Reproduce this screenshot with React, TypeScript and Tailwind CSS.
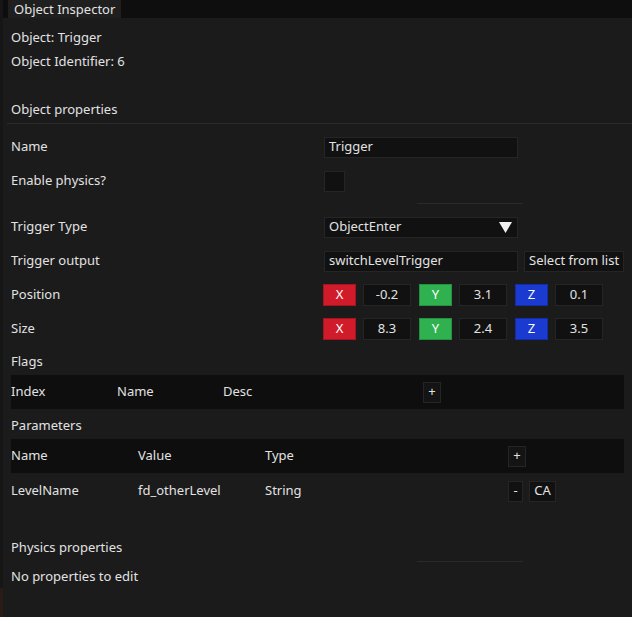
import React from "react";

const Sep = ({ w = "w-[106px]", ml = "ml-[417px]" }: { w?: string; ml?: string }) => (
  <div className={`h-px ${w} ${ml} bg-[#2a2a2a]`} />
);

const Box = ({ children, className = "" }: { children?: React.ReactNode; className?: string }) => (
  <div className={`bg-[#111111] border border-[#252525] flex items-center whitespace-nowrap ${className}`}>{children}</div>
);

const Axis = ({ label, color, value }: { label: string; color: string; value: string }) => (
  <div className="flex items-center">
    <div className={`w-[33px] h-[22px] flex items-center justify-center ${color} text-white`}>{label}</div>
    <Box className="ml-[7px] w-[48px] h-[22px] justify-center">{value}</Box>
  </div>
);

export default function App() {
  return (
    <div
      className="w-[632px] h-[617px] bg-[#1b1b1b] text-[#e2e2e2] text-[13px] relative overflow-hidden"
      style={{ fontFamily: '"Noto Sans", "Open Sans", sans-serif' }}
    >
      <div className="absolute left-0 top-0 w-[3px] h-full bg-[#161616]" />
      <div className="absolute left-0 top-[588px] w-[3px] h-[29px] bg-[#2a1b14]" />
      {/* tab bar */}
      <div className="h-[18px] bg-[#0e0e0e] flex pl-[8px]">
        <div className="bg-[#1f1f1f] px-[6px] h-[18px] flex items-center leading-none">Object Inspector</div>
      </div>
      <div className="pl-[11px] pr-[8px]">
        <div className="h-[24px] mt-[8px] flex items-center">Object: Trigger</div>
        <div className="h-[24px] flex items-center">Object Identifier: 6</div>
        <div className="h-[24px] mt-[24px] flex items-center">Object properties</div>
      </div>
      <div className="h-px bg-[#2a2a2a] ml-[7px] mt-[1px]" />
      <div className="pl-[11px]">
        <div className="flex items-center h-[22px] mt-[12px]">
          <div className="w-[313px]">Name</div>
          <Box className="w-[194px] h-[21px] px-[4px]">Trigger</Box>
        </div>
        <div className="flex items-center h-[22px] mt-[12px]">
          <div className="w-[313px]">Enable physics?</div>
          <Box className="w-[21px] h-[21px]" />
        </div>
      </div>
      <div className="mt-[11px]">
        <Sep />
      </div>
      <div className="pl-[11px]">
        <div className="flex items-center h-[22px] mt-[12px]">
          <div className="w-[313px]">Trigger Type</div>
          <Box className="w-[194px] h-[21px] px-[4px] justify-between">
            <span>ObjectEnter</span>
            <svg width="13" height="11" viewBox="0 0 13 11" className="mr-[1px]">
              <polygon points="0,0 13,0 6.5,11" fill="#f0f0f0" />
            </svg>
          </Box>
        </div>
        <div className="flex items-center h-[22px] mt-[12px]">
          <div className="w-[313px]">Trigger output</div>
          <Box className="w-[194px] h-[21px] px-[4px]">switchLevelTrigger</Box>
          <Box className="ml-[6px] w-[100px] h-[21px] px-[4px]">Select from list</Box>
        </div>
        <div className="flex items-center h-[22px] mt-[12px]">
          <div className="w-[312px]">Position</div>
          <div className="flex gap-[8px]">
            <Axis label="X" color="bg-[#d01c2a] border border-[#a8141e]" value="-0.2" />
            <Axis label="Y" color="bg-[#2fb14f] border border-[#25903f]" value="3.1" />
            <Axis label="Z" color="bg-[#1b3ad0] border border-[#132ca8]" value="0.1" />
          </div>
        </div>
        <div className="flex items-center h-[22px] mt-[12px]">
          <div className="w-[312px]">Size</div>
          <div className="flex gap-[8px]">
            <Axis label="X" color="bg-[#d01c2a] border border-[#a8141e]" value="8.3" />
            <Axis label="Y" color="bg-[#2fb14f] border border-[#25903f]" value="2.4" />
            <Axis label="Z" color="bg-[#1b3ad0] border border-[#132ca8]" value="3.5" />
          </div>
        </div>
        <div className="h-[22px] mt-[11px] flex items-center">Flags</div>
        <div className="mt-[2px] mr-[8px] h-[34px] bg-[#0e0e0e] flex items-center">
          <div className="w-[106px]">Index</div>
          <div className="w-[106px]">Name</div>
          <div className="w-[200px]">Desc</div>
          <Box className="w-[18px] h-[21px] justify-center bg-[#141414]">+</Box>
        </div>
        <div className="h-[22px] mt-[6px] flex items-center">Parameters</div>
        <div className="mt-[2px] mr-[8px] h-[34px] bg-[#0e0e0e] flex items-center">
          <div className="w-[127px]">Name</div>
          <div className="w-[127px]">Value</div>
          <div className="w-[243px]">Type</div>
          <Box className="w-[18px] h-[21px] justify-center bg-[#141414]">+</Box>
        </div>
        <div className="h-[34px] flex items-center mt-[1px]">
          <div className="w-[127px]">LevelName</div>
          <div className="w-[127px]">fd_otherLevel</div>
          <div className="w-[243px]">String</div>
          <Box className="w-[15px] h-[21px] justify-center">-</Box>
          <Box className="ml-[6px] w-[27px] h-[21px] justify-center">CA</Box>
        </div>
        <div className="h-[22px] mt-[29px] flex items-center">Physics properties</div>
      </div>
      <div className="mt-[2px]">
        <Sep />
      </div>
      <div className="pl-[11px]">
        <div className="h-[22px] mt-[4px] flex items-center">No properties to edit</div>
      </div>
    </div>
  );
}
